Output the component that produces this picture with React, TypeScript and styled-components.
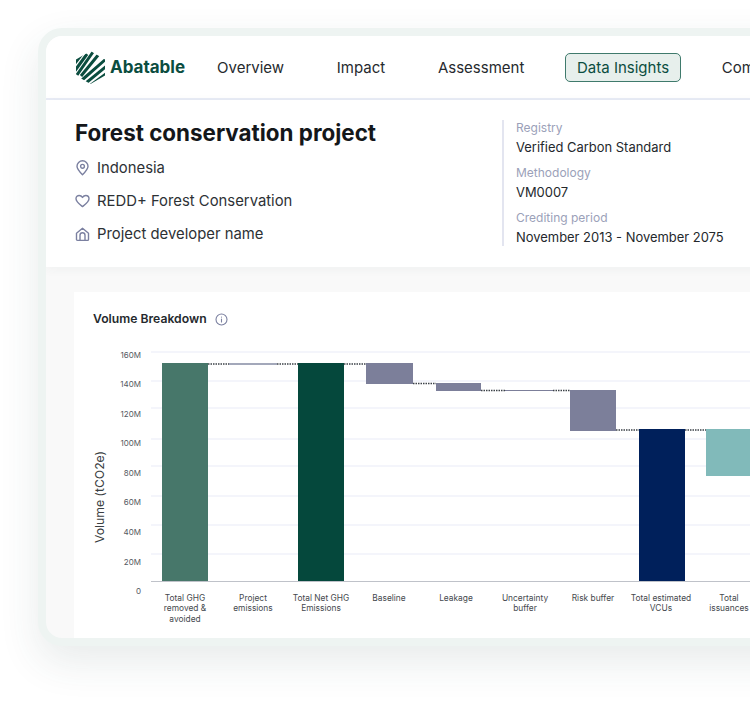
import styled, { createGlobalStyle } from 'styled-components';

const GlobalStyle = createGlobalStyle`
  html, body {
    margin: 0;
    height: 100%;
    background: #fff;
    overflow: hidden;
    font-family: Inter, "Liberation Sans", sans-serif;
  }
`;

const Page = styled.div`
  width: 750px;
  height: 711px;
  padding: 28px 0 0 38px;
  box-sizing: border-box;
  overflow: hidden;
`;

const Frame = styled.div`
  width: 860px;
  height: 618px;
  box-sizing: border-box;
  border: 8px solid #eef4f2;
  border-radius: 24px;
  background: #f9f9f9;
  overflow: hidden;
  box-shadow: 0 16px 40px rgba(50, 75, 70, 0.11);
`;

const Nav = styled.nav`
  height: 64px;
  box-sizing: border-box;
  display: flex;
  align-items: center;
  padding: 0 0 0 29px;
  background: #fff;
  border-bottom: 2px solid #e9ecf6;
`;

const Logo = styled.div`
  display: flex;
  align-items: center;
  gap: 4px;
  margin-right: 20px;
`;

const LogoName = styled.span`
  font-size: 17px;
  font-weight: 700;
  color: #0b4d3f;
`;

const NavList = styled.div`
  display: flex;
  align-items: center;
  gap: 28.7px;
`;

const NavItem = styled.div<{ $active?: boolean }>`
  padding: 5px 11px;
  border: 1px solid ${p => (p.$active ? '#3f7a6c' : 'transparent')};
  border-radius: 5px;
  background: ${p => (p.$active ? '#e7efec' : 'transparent')};
  color: ${p => (p.$active ? '#0b4d3f' : '#262a2e')};
  font-size: 15px;
  line-height: 17px;
  font-weight: 400;
  white-space: nowrap;
`;

const Project = styled.section`
  height: 167px;
  box-sizing: border-box;
  display: flex;
  padding: 20px 0 0 29px;
  background: #fff;
  box-shadow: 0 2px 10px rgba(60, 70, 80, 0.05);
  position: relative;
`;

const Summary = styled.div`
  width: 427px;
`;

const Title = styled.h1`
  margin: 0 0 12px;
  font-size: 22.4px;
  line-height: 26px;
  font-weight: 700;
  color: #14171a;
`;

const FactList = styled.div`
  display: flex;
  flex-direction: column;
  gap: 13px;
`;

const Fact = styled.div`
  display: flex;
  align-items: center;
  gap: 7px;
  height: 20px;
  font-size: 14.85px;
  color: #2d3135;
`;

const Icon = styled.svg`
  width: 15px;
  height: 16px;
  flex: none;
  fill: none;
  stroke: #7b80a0;
  stroke-width: 1.4;
  stroke-linecap: round;
  stroke-linejoin: round;
`;

const Details = styled.div`
  height: 126px;
  box-sizing: border-box;
  border-left: 2px solid #e3e5f0;
  padding-left: 12px;
  display: flex;
  flex-direction: column;
  gap: 10px;
`;

const Detail = styled.div`
  display: flex;
  flex-direction: column;
  gap: 5px;
`;

const DetailLabel = styled.span`
  font-size: 12px;
  line-height: 15px;
  color: #9ba1b9;
`;

const DetailValue = styled.span`
  font-size: 12.95px;
  line-height: 15px;
  color: #24282c;
`;

const Body = styled.div`
  padding: 25px 0 0 28px;
`;

const ChartCard = styled.section`
  background: #fff;
  height: 346px;
`;

const ChartHead = styled.div`
  height: 48px;
  box-sizing: border-box;
  padding: 19px 0 0 19px;
  display: flex;
  align-items: flex-start;
  gap: 8px;
`;

const ChartTitle = styled.h2`
  margin: 0;
  font-size: 12.2px;
  line-height: 16px;
  font-weight: 600;
  color: #25292d;
`;

const InfoIcon = styled.svg`
  width: 13px;
  height: 13px;
  margin-top: 2px;
  fill: none;
  stroke: #7b80a0;
  stroke-width: 1.1;
  stroke-linecap: round;
`;

const ChartSvg = styled.svg`
  display: block;
`;

const TickText = styled.text`
  font-family: Inter, "Liberation Sans", sans-serif;
  font-size: 8px;
  fill: #55595f;
`;

const CategoryText = styled.text`
  font-family: Inter, "Liberation Sans", sans-serif;
  font-size: 8.4px;
  fill: #45494e;
`;

const AxisTitle = styled.text`
  font-family: Inter, "Liberation Sans", sans-serif;
  font-size: 12.2px;
  fill: #3a3e42;
`;

const facts = [
  { text: 'Indonesia', icon: <><path d="M7.5 14.8C4.5 11.8 2 9.2 2 6.3a5.5 5.5 0 0 1 11 0c0 2.9-2.5 5.5-5.5 8.5z" /><circle cx="7.5" cy="6.3" r="1.9" /></> },
  { text: 'REDD+ Forest Conservation', icon: <path d="M7.5 13.6C4 10.8 1 8.6 1 5.7 1 3.7 2.5 2.5 4.2 2.5c1.4 0 2.5.7 3.3 1.9.8-1.2 1.9-1.9 3.3-1.9 1.7 0 3.2 1.2 3.2 3.2 0 2.9-3 5.1-6.5 7.9z" /> },
  { text: 'Project developer name', icon: <><path d="M1.5 7.2 7.5 2.2l6 5v6.2a1 1 0 0 1-1 1h-10a1 1 0 0 1-1-1z" /><path d="M5 14.4V9.3a2.5 2.5 0 0 1 5 0v5.100" /></> },
];

const details = [
  { label: 'Registry', value: 'Verified Carbon Standard' },
  { label: 'Methodology', value: 'VM0007' },
  { label: 'Crediting period', value: 'November 2013 - November 2075' },
];

const navItems = ['Overview', 'Impact', 'Assessment', 'Data Insights', 'Community'];

const gridLines = [352, 381, 408, 439, 466, 496, 525, 554];
const yTicks = [
  { label: '160M', y: 358 }, { label: '140M', y: 387 }, { label: '120M', y: 417 }, { label: '100M', y: 446 },
  { label: '80M', y: 476 }, { label: '60M', y: 505 }, { label: '40M', y: 535 }, { label: '20M', y: 565 }, { label: '0', y: 594 },
];

const bars = [
  { x: 162, w: 46, top: 363, bottom: 581, color: '#47776a', center: 185, lines: ['Total GHG', 'removed &', 'avoided'] },
  { x: 229, w: 48, top: 363, bottom: 365, color: '#a3a8ba', center: 253, lines: ['Project', 'emissions'] },
  { x: 298, w: 46, top: 363, bottom: 581, color: '#05483c', center: 321, lines: ['Total Net GHG', 'Emissions'] },
  { x: 366, w: 47, top: 363, bottom: 384, color: '#7c7f9a', center: 389, lines: ['Baseline'] },
  { x: 436, w: 45, top: 383, bottom: 391, color: '#7c7f9a', center: 456, lines: ['Leakage'] },
  { x: 505, w: 48, top: 390, bottom: 391, color: '#7c7f9a', center: 525, lines: ['Uncertainty', 'buffer'] },
  { x: 570, w: 46, top: 390, bottom: 431, color: '#7c7f9a', center: 593, lines: ['Risk buffer'] },
  { x: 639, w: 46, top: 429, bottom: 581, color: '#00205b', center: 661, lines: ['Total estimated', 'VCUs'] },
  { x: 706, w: 46, top: 429, bottom: 476, color: '#81baba', center: 729, lines: ['Total', 'issuances'] },
];

const connectors = [
  { x1: 208, x2: 229, y: 364 }, { x1: 277, x2: 298, y: 364 }, { x1: 344, x2: 366, y: 364 },
  { x1: 413, x2: 436, y: 383.5 }, { x1: 481, x2: 505, y: 390.5 }, { x1: 553, x2: 570, y: 390.5 },
  { x1: 616, x2: 639, y: 430 }, { x1: 685, x2: 706, y: 430 },
];

const labelY = [601, 610.5, 622];

const LogoMark = () => (
  <svg width="31" height="33" viewBox="0 0 31 33">
    <defs>
      <clipPath id="hex">
        <path d="M15.5 0 30 8.5V24.5L15.5 33 1 24.5V8.5z" />
      </clipPath>
    </defs>
    <g clipPath="url(#hex)" stroke="#0b4d3f" strokeWidth="3" fill="none">
      <path d="M0 12 7 3M0 19.5 12 3M2 24 18 1M6 25 24 3" />
      <path d="M7 29 31 8M11 32 31 15.5M16 34 31 23M22 34 31 29" />
    </g>
  </svg>
);

export default function App() {
  return (
    <>
      <GlobalStyle />
      <Page>
        <Frame>
          <Nav>
            <Logo>
              <LogoMark />
              <LogoName>Abatable</LogoName>
            </Logo>
            <NavList>
              {navItems.map(item => (
                <NavItem key={item} $active={item === 'Data Insights'}>{item}</NavItem>
              ))}
            </NavList>
          </Nav>
          <Project>
            <Summary>
              <Title>Forest conservation project</Title>
              <FactList>
                {facts.map(fact => (
                  <Fact key={fact.text}>
                    <Icon viewBox="0 0 15 16">{fact.icon}</Icon>
                    {fact.text}
                  </Fact>
                ))}
              </FactList>
            </Summary>
            <Details>
              {details.map(detail => (
                <Detail key={detail.label}>
                  <DetailLabel>{detail.label}</DetailLabel>
                  <DetailValue>{detail.value}</DetailValue>
                </Detail>
              ))}
            </Details>
          </Project>
          <Body>
            <ChartCard>
              <ChartHead>
                <ChartTitle>Volume Breakdown</ChartTitle>
                <InfoIcon viewBox="0 0 13 13">
                  <circle cx="6.5" cy="6.5" r="5.5" />
                  <path d="M6.5 6v3M6.5 4v.1" />
                </InfoIcon>
              </ChartHead>
              <ChartSvg width="750" height="298" viewBox="74 340 750 298">
                {gridLines.map(y => (
                  <line key={y} x1="151" x2="824" y1={y} y2={y} stroke="#e9ebf7" strokeWidth="1" />
                ))}
                <line x1="151" x2="824" y1="581.5" y2="581.5" stroke="#bfc2c9" strokeWidth="1.2" />
                {yTicks.map(tick => (
                  <TickText key={tick.label} x="141" y={tick.y} textAnchor="end">{tick.label}</TickText>
                ))}
                <AxisTitle x="104" y="497" textAnchor="middle" transform="rotate(-90 104 497)">Volume (tCO2e)</AxisTitle>
                {connectors.map(c => (
                  <line key={c.x1} x1={c.x1} x2={c.x2} y1={c.y} y2={c.y} stroke="#3c4248" strokeWidth="1.3" strokeDasharray="1.5 1" />
                ))}
                {bars.map(bar => (
                  <g key={bar.x}>
                    <rect x={bar.x} y={bar.top} width={bar.w} height={bar.bottom - bar.top} fill={bar.color} />
                    {bar.lines.map((line, i) => (
                      <CategoryText key={line} x={bar.center} y={labelY[i]} textAnchor="middle">{line}</CategoryText>
                    ))}
                  </g>
                ))}
              </ChartSvg>
            </ChartCard>
          </Body>
        </Frame>
      </Page>
    </>
  );
}
